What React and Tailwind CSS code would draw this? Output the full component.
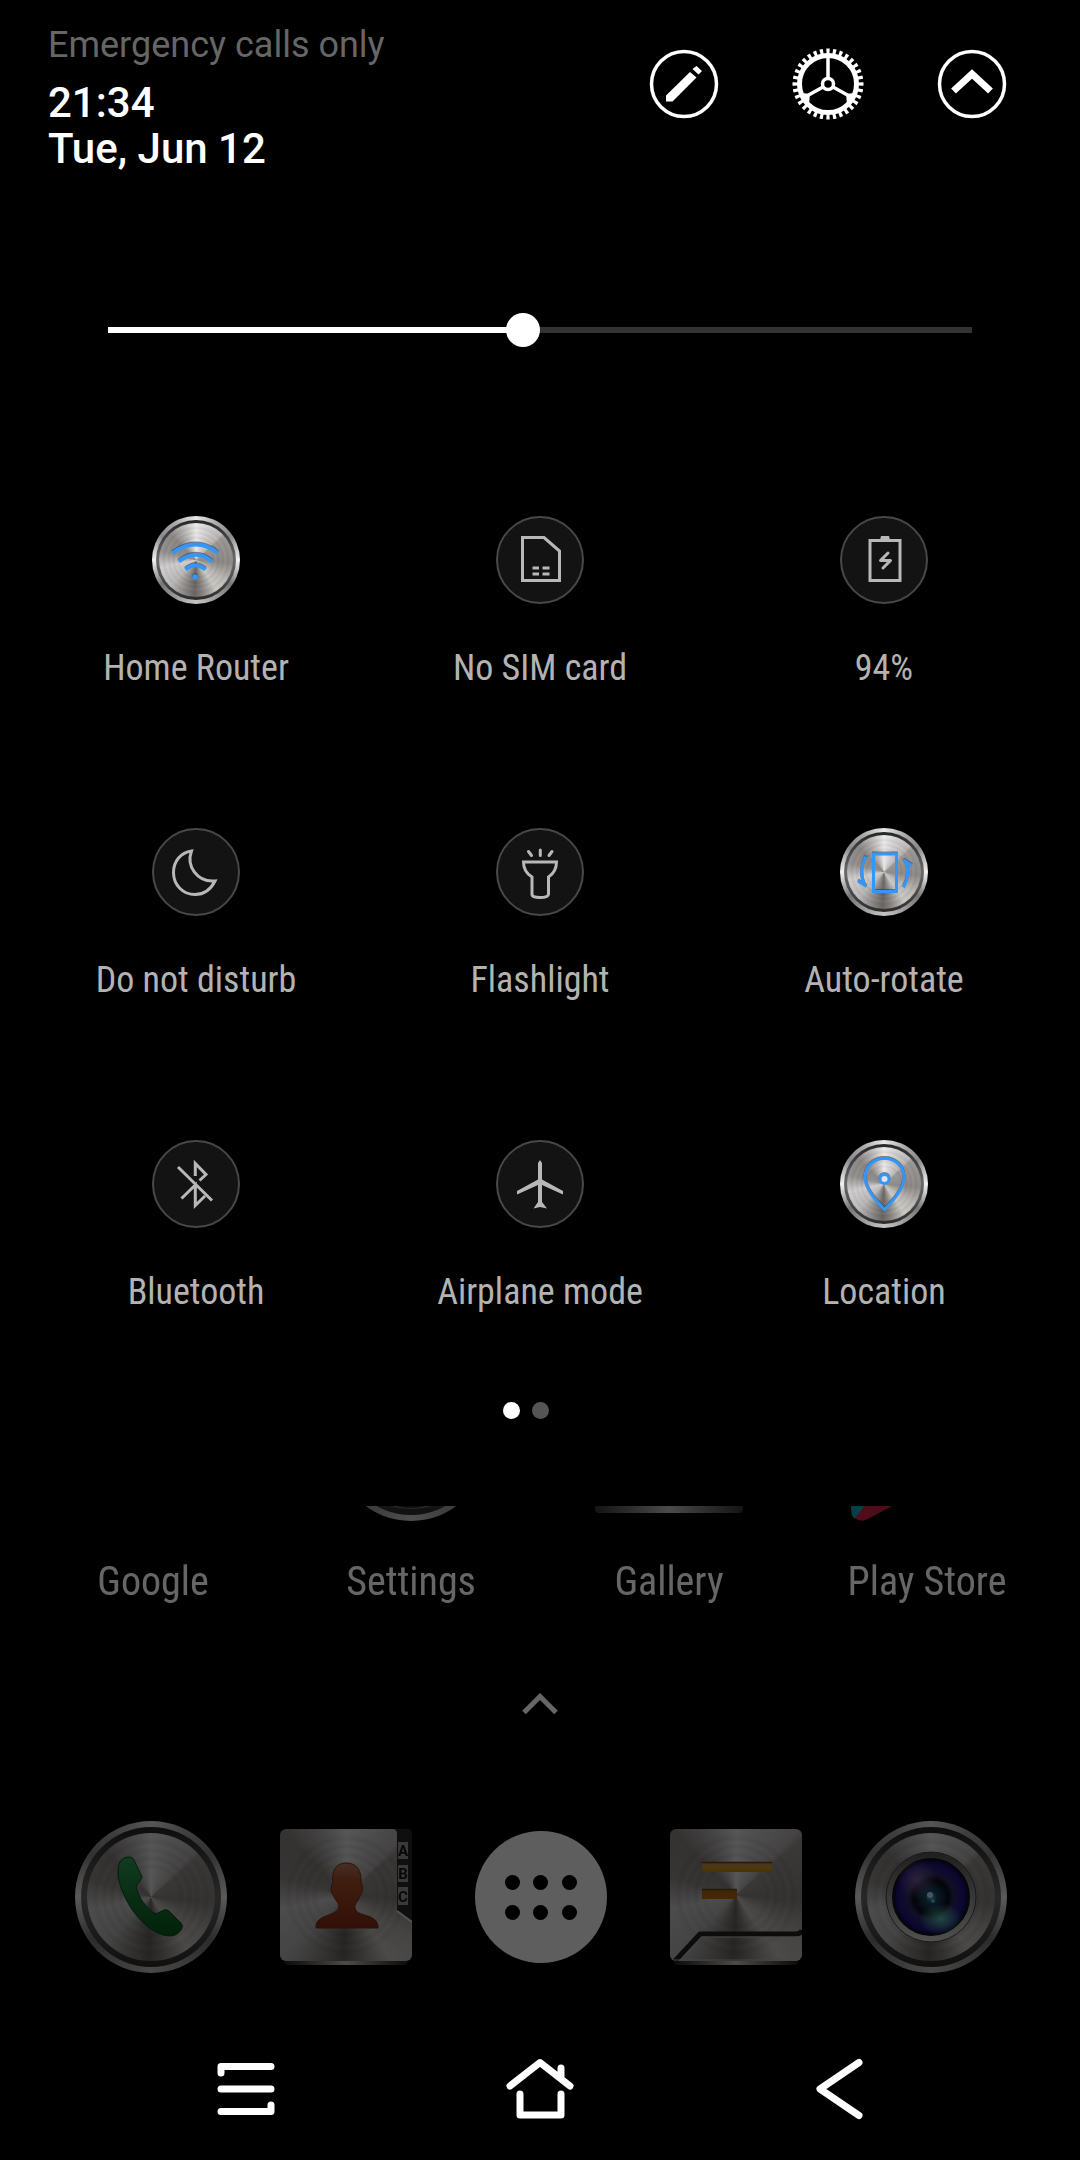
import { useState } from "react";
import clsx from "clsx";

const tileIcons = {
  wifi: (
    <g strokeWidth={4}>
      <path d="M20.5 37Q44 20 66 37M27 45.500Q43.5 32 60 45.500M33.5 53.500Q43.5 45 53.5 53.500" />
      <circle cx={43} cy={61} r={2.7} fill="currentColor" stroke="none" />
    </g>
  ),
  sim: (
    <path
      d="M26.5 21.5H48L63.5 35V64.5H26.5ZM36.5 52H43M46.5 52H53.5M36.5 58H43M46.5 58H53.5"
      strokeWidth={3}
    />
  ),
  battery: (
    <g>
      <path d="M30 24.5H60V64.5H30Z" strokeWidth={3} />
      <path d="M40 24L41 20H49L50 24Z" fill="currentColor" stroke="none" />
      <path
        d="M48 37L40.5 44.5H50.5L43 52"
        strokeWidth={3}
        strokeLinecap="round"
        strokeLinejoin="round"
      />
    </g>
  ),
  moon: (
    <path
      d="M39.5 23C34 38 45 54.5 63 53C58 63 51 66.5 43 66.5C31 66.5 21.5 57 21.5 44.5C21.5 33 29 24.5 39.5 23Z"
      strokeWidth={3}
    />
  ),
  flashlight: (
    <g strokeWidth={3}>
      <path d="M27.5 34H60.5C60.5 42 57 46 52.5 49V66Q52.5 69.5 44 69.5T36 66V49C31 46 27.5 42 27.5 34Z" />
      <path
        d="M44.3 22V27.5M32.5 23.5L35.5 27.5M56 23.5L53 27.5"
        strokeLinecap="round"
      />
    </g>
  ),
  rotate: (
    <g strokeWidth={3}>
      <path d="M33.5 26H56.5V63.5H33.5Z" />
      <path d="M26 28.5C20.5 38 20.5 49 24.5 57.5M26.5 58.5L18 53M63.5 59.5C69 49 69 41 65.5 33M63.5 32L72 37.5" />
    </g>
  ),
  bluetooth: (
    <path
      d="M26 27L60 60.5M43.3 36V23.5L54 34.5L47.5 40.5M29.5 58.5L43.3 45V65.5L53 56"
      strokeWidth={3}
    />
  ),
  airplane: (
    <path
      d="M44 20L46 23V39.5L67 51V54.5L46 45V62L51 68.5L44 67L37.5 68.5L42 62V45L21 54.5V51L42 39.5V23Z"
      fill="currentColor"
      stroke="none"
    />
  ),
  location: (
    <g strokeWidth={3}>
      <path d="M44.5 69.5C34 59 25 48 25 37A19.5 18.5 0 0 1 64 37C64 48 55 59 44.5 69.5Z" />
      <circle cx={44.5} cy={39} r={4.5} fill="#e3e3e6" />
    </g>
  ),
};

const initialTiles = [
  { id: "wifi", label: "Home Router", active: true },
  { id: "sim", label: "No SIM card", active: false },
  { id: "battery", label: "94%", active: false },
  { id: "moon", label: "Do not disturb", active: false },
  { id: "flashlight", label: "Flashlight", active: false },
  { id: "rotate", label: "Auto-rotate", active: true },
  { id: "bluetooth", label: "Bluetooth", active: false },
  { id: "airplane", label: "Airplane mode", active: false },
  { id: "location", label: "Location", active: true },
];

const faceClass =
  "bg-[radial-gradient(circle,#0000_30%,#0000000d_34%,#ffffff08_38%,#00000012_43%,#0000_47%,#0000000f_52%,#ffffff08_56%,#0000000f_61%,#0000_66%),conic-gradient(#ece9ea_0deg,#d6d3d4_18deg,#bcb8b7_44deg,#9c9895_50deg,#8e8a87_95deg,#bdbab6_125deg,#cbc9c4_145deg,#8a8784_168deg,#696664_182deg,#8a8785_200deg,#bcbab9_225deg,#d0cece_258deg,#94908e_285deg,#8c8886_315deg,#c2bfbf_342deg,#ece9ea_360deg)]";

// Round brushed metal plate with a polished rim
const MetalDisc = ({ small, children }) => (
  <span
    className={clsx(
      "relative block shrink-0 rounded-full bg-[conic-gradient(#e8e8e8,#a8a8a8_30deg,#8a8a8a_55deg,#f2f2f2_90deg,#777_125deg,#c4c4c4_180deg,#777_235deg,#f2f2f2_270deg,#8a8a8a_305deg,#a8a8a8_330deg,#e8e8e8)]",
      small ? "size-[88px] p-1" : "size-[152px] p-[6px]"
    )}
  >
    <span
      className={clsx(
        "block size-full rounded-full bg-linear-to-b from-[#252628] via-[#6a6b6e] to-[#2b2b2b]",
        small ? "p-[3px]" : "p-[6px]"
      )}
    >
      <span className={clsx("block size-full rounded-full", faceClass)} />
    </span>
    {children}
  </span>
);

const Tile = ({ tile, onToggle }) => {
  const icon = (
    <svg
      viewBox="0 0 88 88"
      fill="none"
      stroke="currentColor"
      className={clsx(
        "absolute inset-0 size-full",
        tile.active
          ? "text-[#3496fb] drop-shadow-[0_-1px_0_#24344a90]"
          : "text-[#b8b8b8]"
      )}
      aria-hidden="true"
    >
      {tileIcons[tile.id]}
    </svg>
  );

  return (
    <button
      type="button"
      aria-pressed={tile.active}
      onClick={() => onToggle(tile.id)}
      className="flex flex-col items-center gap-[43px]"
    >
      {tile.active ? (
        <MetalDisc small>{icon}</MetalDisc>
      ) : (
        <span className="relative block size-[88px] rounded-full border-2 border-[#484848] bg-[#131313]">
          <span className="absolute -inset-[2px]">{icon}</span>
        </span>
      )}
      <span className="font-['Roboto_Condensed','Liberation_Sans_Narrow',Roboto,sans-serif] text-[36px] leading-[42px] whitespace-nowrap text-[#b3b3b3]">
        {tile.label}
      </span>
    </button>
  );
};

const HeaderButton = ({ label, children }) => (
  <button type="button" aria-label={label} className="size-[72px]">
    <svg viewBox="0 0 72 72" fill="none" stroke="white" className="size-full">
      {children}
    </svg>
  </button>
);

const Header = () => (
  <header className="flex items-start justify-between pt-6 pr-[72px] pl-12">
    <div>
      <p className="text-[36px] leading-[42px] text-[#666]">
        Emergency calls only
      </p>
      <div className="mt-[14px] text-[42px] leading-[46px] font-medium text-white">
        <p>21:34</p>
        <p>Tue, Jun 12</p>
      </div>
    </div>
    <div className="mt-6 flex gap-[72px]">
      <HeaderButton label="Edit tiles">
        <circle cx={36} cy={36} r={32.5} strokeWidth={3.5} />
        <path
          d="M42 24L48.5 29.5L24.5 53.5H18V47.5ZM44.5 21L48.5 18L54 23L50.5 26.5Z"
          fill="white"
          stroke="none"
        />
      </HeaderButton>
      <HeaderButton label="Settings">
        <circle
          cx={36}
          cy={36}
          r={32.5}
          strokeWidth={6}
          pathLength={64}
          strokeDasharray="1 1"
          strokeDashoffset={0.5}
        />
        <circle cx={36} cy={36} r={28.5} strokeWidth={5} />
        <circle cx={36} cy={36} r={5.5} strokeWidth={3.5} />
        <path d="M36 8V30M31 39L13 49M41 39L59 49" strokeWidth={3.5} />
        <path
          d="M10 45L18 46L17 56ZM62 45L54 46L55 56Z"
          fill="white"
          stroke="none"
        />
      </HeaderButton>
      <HeaderButton label="Collapse">
        <circle cx={36} cy={36} r={32.5} strokeWidth={3.5} />
        <path d="M17.5 43L36 26L54.5 43" strokeWidth={7} />
      </HeaderButton>
    </div>
  </header>
);

const Brightness = () => {
  const [value, setValue] = useState(48);

  return (
    <div className="mx-[10%] mt-[141px]">
      <input
        type="range"
        min={0}
        max={100}
        value={value}
        aria-label="Brightness"
        onChange={(e) => setValue(Number(e.target.value))}
        style={{
          backgroundImage: `linear-gradient(to right, #fff ${value}%, #333 ${value}%)`,
        }}
        className="block h-[34px] w-full appearance-none bg-[length:100%_6px] bg-center bg-no-repeat [&::-webkit-slider-thumb]:size-[34px] [&::-webkit-slider-thumb]:appearance-none [&::-webkit-slider-thumb]:rounded-full [&::-webkit-slider-thumb]:bg-white"
      />
    </div>
  );
};

const QuickPanel = () => {
  const [tiles, setTiles] = useState(initialTiles);

  const handleToggle = (id) => {
    setTiles((prev) =>
      prev.map((t) => (t.id === id ? { ...t, active: !t.active } : t))
    );
  };

  return (
    <section className="pb-[87px]">
      <Header />
      <Brightness />
      <div className="mt-[169px] grid grid-cols-3 gap-y-[139px] px-6">
        {tiles.map((tile) => (
          <Tile key={tile.id} tile={tile} onToggle={handleToggle} />
        ))}
      </div>
      <div className="mt-[89px] flex justify-center gap-3 pr-[29px]">
        <span className="size-[17px] rounded-full bg-white" />
        <span className="size-[17px] rounded-full bg-[#555]" />
      </div>
    </section>
  );
};

const HomeLabels = () => (
  <section className="opacity-40">
    {/* Lower edges of the icons hidden behind the panel */}
    <div className="grid h-[15px] grid-cols-4 grid-rows-[15px] justify-items-center overflow-hidden px-6">
      <span />
      <span className="flex h-[15px] items-end">
        <MetalDisc>
          <span className="absolute inset-[13px] rounded-full bg-[#222]" />
        </MetalDisc>
      </span>
      <span className="h-[7px] w-[148px] rounded-b-sm bg-linear-to-r from-[#333] via-[#bbb] to-[#333]" />
      <svg viewBox="0 0 152 15" className="h-[15px] w-[152px]">
        <path d="M0 0H14L4 13Q0 11 0 0Z" fill="#00a0b4" />
        <path d="M14 0H41L17 13Q9 17 4 12Z" fill="#c81f45" />
      </svg>
    </div>
    <div className="mt-9 grid grid-cols-4 px-6 font-['Roboto_Condensed','Liberation_Sans_Narrow',Roboto,sans-serif] text-[40px] leading-[50px] text-white">
      {["Google", "Settings", "Gallery", "Play Store"].map((name) => (
        <a key={name} href="#" className="text-center whitespace-nowrap">
          {name}
        </a>
      ))}
    </div>
    <button
      type="button"
      aria-label="All apps"
      className="mx-auto mt-[86px] block"
    >
      <svg
        viewBox="0 0 36 22"
        fill="none"
        stroke="white"
        className="h-[22px] w-9"
      >
        <path d="M2 19.5L18 3.5L34 19.5" strokeWidth={5} />
      </svg>
    </button>
  </section>
);

const PhoneIcon = () => (
  <MetalDisc>
    <svg viewBox="0 0 152 152" className="absolute inset-0 size-full">
      <defs>
        <linearGradient id="phone" x1="0" y1="0" x2="0" y2="1">
          <stop offset="0" stopColor="#2fa35b" />
          <stop offset="0.5" stopColor="#1a7c37" />
          <stop offset="1" stopColor="#075c1c" />
        </linearGradient>
      </defs>
      <path
        d="M45 41Q48 36 54 36Q58 36 59 39L67 56Q67 58 61 65C63 77 72 88 81 93L89 89Q92 88 94 90L106 102Q109 105 106 109Q102 115 95 115C84 115 72 107 62 95C51 82 42 61 43 50Q43 45 45 41Z"
        fill="url(#phone)"
        stroke="#0b4a1d"
      />
    </svg>
  </MetalDisc>
);

// Square brushed metal plate with a thin lip below
const MetalCard = ({ children }) => (
  <span className="relative block h-[136px] w-[132px]">
    <span className={clsx("block h-[132px] rounded-md", faceClass)} />
    <span className="mx-1 block h-1 rounded-b-sm bg-linear-to-r from-[#222] via-[#ccc] to-[#222]" />
    <svg
      viewBox="0 0 132 136"
      className="absolute inset-0 size-full"
      fill="none"
    >
      {children}
    </svg>
  </span>
);

const ContactsIcon = () => (
  <MetalCard>
    <defs>
      <linearGradient id="person" x1="0" y1="0" x2="0" y2="1">
        <stop offset="0" stopColor="#bd8169" />
        <stop offset="0.25" stopColor="#ad532b" />
        <stop offset="1" stopColor="#872a16" />
      </linearGradient>
    </defs>
    <path
      d="M114 0H128Q132 0 132 4V93L117 82V5Q117 1 114 0Z"
      fill="#2a2a2a"
    />
    <path d="M117 82L132 93" stroke="#ddd" strokeWidth={2} />
    <path
      d="M66 34C77 34 82 42 81 54Q85 60 80 67C78 73 74 75 75 79C76 88 95 84 98 96V99H36V96C38 85 59 87 59 77C59 74 55 71 53 66Q49 60 53 54C51 42 56 34 66 34Z"
      fill="url(#person)"
      stroke="#713019"
    />
    <path
      d="M118 13H128V30H118ZM118 36H128V53H118ZM118 58H128V76H118Z"
      fill="#9b9b9b"
    />
    <g
      fill="#141414"
      textAnchor="middle"
      className="font-[Roboto,sans-serif] text-[15px] font-bold"
    >
      <text x={123} y={27}>
        A
      </text>
      <text x={123} y={50}>
        B
      </text>
      <text x={123} y={73}>
        C
      </text>
    </g>
  </MetalCard>
);

const MessagesIcon = () => (
  <MetalCard>
    <defs>
      <linearGradient id="bar" x1="0" y1="0" x2="0" y2="1">
        <stop offset="0" stopColor="#b98a35" />
        <stop offset="0.5" stopColor="#d09a3c" />
        <stop offset="1" stopColor="#c98500" />
      </linearGradient>
      <linearGradient id="bar-low" x1="0" y1="0" x2="0" y2="1">
        <stop offset="0" stopColor="#a86a25" />
        <stop offset="1" stopColor="#c26c00" />
      </linearGradient>
    </defs>
    <path d="M32 33H102V43H32Z" fill="url(#bar)" />
    <path d="M32 60H67V70H32Z" fill="url(#bar-low)" />
    <path d="M32 33.5H102M32 60.5H67" stroke="#6b4a10" strokeWidth={1.5} />
    <path
      d="M5 132L30 105H126Q131 105 132 101"
      stroke="#222"
      strokeWidth={5}
    />
    <path d="M9 132L32 108H132" stroke="#bbb" />
    <path d="M4 131H128" stroke="#bbb" />
  </MetalCard>
);

const CameraIcon = () => (
  <MetalDisc>
    <svg viewBox="0 0 152 152" className="absolute inset-0 size-full">
      <defs>
        <radialGradient id="lens" cx="0.5" cy="0.5" r="0.5">
          <stop offset="0" stopColor="#5bb3d0" />
          <stop offset="0.15" stopColor="#164c68" />
          <stop offset="0.45" stopColor="#0b0d1d" />
          <stop offset="0.6" stopColor="#2d2a68" />
          <stop offset="0.85" stopColor="#221487" />
          <stop offset="1" stopColor="#0b0740" />
        </radialGradient>
        <radialGradient id="glow">
          <stop offset="0" stopColor="#5ccdbb" stopOpacity="0.9" />
          <stop offset="1" stopColor="#5ccdbb" stopOpacity="0" />
        </radialGradient>
        <radialGradient id="shine">
          <stop offset="0" stopColor="#8a6aa8" stopOpacity="0.8" />
          <stop offset="1" stopColor="#8a6aa8" stopOpacity="0" />
        </radialGradient>
        <linearGradient id="rim" x1="0" y1="0" x2="0" y2="1">
          <stop offset="0" stopColor="#555" />
          <stop offset="1" stopColor="#d8d8d8" />
        </linearGradient>
      </defs>
      <circle cx={76} cy={76} r={45} fill="url(#rim)" stroke="#444" />
      <circle
        cx={76}
        cy={76}
        r={38}
        fill="url(#lens)"
        stroke="#111"
        strokeWidth={2}
      />
      <ellipse cx={86} cy={98} rx={22} ry={16} fill="url(#glow)" />
      <ellipse cx={62} cy={58} rx={20} ry={20} fill="url(#shine)" />
      <circle cx={75} cy={74} r={3} fill="#b7ecfa" />
      <circle cx={78} cy={80} r={2} fill="#6cb9d6" />
    </svg>
  </MetalDisc>
);

const AppsIcon = () => (
  <span className="grid size-[132px] grid-cols-3 place-content-center place-items-center gap-x-[14px] gap-y-[15px] rounded-full bg-white px-[30px]">
    {[0, 1, 2, 3, 4, 5].map((dot) => (
      <span key={dot} className="size-[15px] rounded-full bg-black" />
    ))}
  </span>
);

const dockItems = [
  { name: "Phone", Icon: PhoneIcon },
  { name: "Contacts", Icon: ContactsIcon },
  { name: "Apps", Icon: AppsIcon },
  { name: "Messages", Icon: MessagesIcon },
  { name: "Camera", Icon: CameraIcon },
];

const Dock = () => (
  <section className="mt-[106px] grid grid-cols-5 pr-[52px] pl-[54px] opacity-37">
    {dockItems.map(({ name, Icon }) => (
      <button
        key={name}
        type="button"
        aria-label={name}
        className="flex h-[152px] items-center justify-center"
      >
        <Icon />
      </button>
    ))}
  </section>
);

const navItems = [
  { name: "Recents", d: "M5 14V7.500H55M5 30H55M55 46V52.500H5" },
  { name: "Home", d: "M0 27L30 3.500L60 27M51 18V9M10 35V56H51V35" },
  { name: "Back", d: "M55 3.500L16 30L55 56.500" },
];

const NavBar = () => (
  <nav className="mt-[86px] grid grid-cols-3 px-[99px] pb-[42px]">
    {navItems.map(({ name, d }) => (
      <button
        key={name}
        type="button"
        aria-label={name}
        className="flex justify-center"
      >
        <svg
          viewBox="0 0 60 60"
          fill="none"
          stroke="white"
          strokeWidth={7}
          strokeLinecap="round"
          strokeLinejoin="round"
          className="size-[60px] overflow-visible"
        >
          <path d={d} />
        </svg>
      </button>
    ))}
  </nav>
);

export default function App() {
  return (
    <main className="min-h-screen bg-black font-[Roboto,sans-serif]">
      <QuickPanel />
      <HomeLabels />
      <Dock />
      <NavBar />
    </main>
  );
}
